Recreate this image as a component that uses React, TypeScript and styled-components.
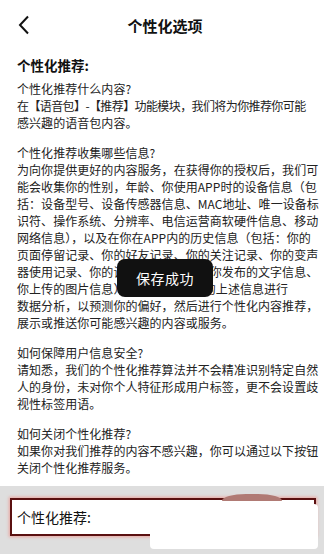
import styled, { createGlobalStyle } from 'styled-components';

const GlobalStyle = createGlobalStyle`
  html, body {
    margin: 0;
    padding: 0;
    background: #ffffff;
  }
  body {
    font-family: "Noto Sans CJK SC", "Noto Sans", sans-serif;
    color: #222222;
  }
`;

interface Section {
  question: string;
  lines: string[];
}

const sections: Section[] = [
  {
    question: '个性化推荐什么内容?',
    lines: ['在【语音包】-【推荐】功能模块，我们将为你推荐你可能', '感兴趣的语音包内容。'],
  },
  {
    question: '个性化推荐收集哪些信息?',
    lines: [
      '为向你提供更好的内容服务，在获得你的授权后，我们可',
      '能会收集你的性别，年龄、你使用APP时的设备信息（包',
      '括：设备型号、设备传感器信息、MAC地址、唯一设备标',
      '识符、操作系统、分辨率、电信运营商软硬件信息、移动',
      '网络信息），以及在你在APP内的历史信息（包括：你的',
      '页面停留记录、你的好友记录、你的关注记录、你的变声',
      '器使用记录、你的语音包使用记录、你发布的文字信息、',
      '你上传的图片信息），我们会根据你的上述信息进行',
      '数据分析，以预测你的偏好，然后进行个性化内容推荐，',
      '展示或推送你可能感兴趣的内容或服务。',
    ],
  },
  {
    question: '如何保障用户信息安全?',
    lines: [
      '请知悉，我们的个性化推荐算法并不会精准识别特定自然',
      '人的身份，未对你个人特征形成用户标签，更不会设置歧',
      '视性标签用语。',
    ],
  },
  {
    question: '如何关闭个性化推荐?',
    lines: ['如果你对我们推荐的内容不感兴趣，你可以通过以下按钮', '关闭个性化推荐服务。'],
  },
];

function App() {
  return (
    <>
      <GlobalStyle />
      <Page>
        <NavBar>
          <BackButton aria-label="返回">
            <svg width="12" height="20" viewBox="0 0 12 20">
              <polyline points="10,1.5 2,10 10,18.5" fill="none" stroke="#111" strokeWidth="2" />
            </svg>
          </BackButton>
          <Title>个性化选项</Title>
          <span />
        </NavBar>

        <Content>
          <Heading>个性化推荐:</Heading>
          {sections.map((section) => (
            <Paragraph key={section.question}>
              {section.question}
              {section.lines.map((line) => (
                <Line key={line} $tight={line.includes('【')}>
                  {line}
                </Line>
              ))}
            </Paragraph>
          ))}
        </Content>

        <Footer>
          <SwitchCard>
            <CardLabel>个性化推荐:</CardLabel>
          </SwitchCard>
          <Smudge />
          <Patch />
        </Footer>

        <Toast>保存成功</Toast>
      </Page>
    </>
  );
}

export default App;

const Page = styled.div`
  position: relative;
  display: flex;
  flex-direction: column;
  width: 324px;
  height: 554px;
  overflow: hidden;
  background: #fff;
`;

const NavBar = styled.div`
  display: grid;
  grid-template-columns: 60px 1fr 60px;
  align-items: center;
  height: 50px;
`;

const BackButton = styled.button`
  display: flex;
  align-items: center;
  padding: 0 0 0 18px;
  border: none;
  background: none;
`;

const Title = styled.div`
  text-align: center;
  font-size: 15px;
  font-weight: 700;
  color: #111;
  padding-left: 6px;
`;

const Content = styled.div`
  flex: 1;
  padding: 5px 10px 0 17px;
  display: flex;
  flex-direction: column;
  gap: 13px;
`;

const Heading = styled.div`
  font-size: 13.5px;
  font-weight: 700;
  line-height: 20px;
  color: #111;
  margin-bottom: -8.5px;
`;

const Paragraph = styled.div`
  font-size: 12px;
  line-height: 17px;
  letter-spacing: 0.05px;
  white-space: nowrap;
`;

const Line = styled.div<{ $tight?: boolean }>`
  letter-spacing: ${({ $tight }) => ($tight ? '-0.6px' : '0.05px')};
`;

const Footer = styled.div`
  position: relative;
  height: 68px;
  padding: 12px 8px 0 10px;
  box-sizing: border-box;
  background: #dedede;
`;

const SwitchCard = styled.div`
  display: flex;
  align-items: center;
  height: 38px;
  padding-left: 5px;
  box-sizing: border-box;
  background: #fff;
  border: 2px solid #5a1010;
  box-shadow: 0 0 3px 1px #eaa49e;
`;

const CardLabel = styled.span`
  font-size: 14px;
  color: #111;
`;

const Smudge = styled.div`
  position: absolute;
  left: 222px;
  top: 8px;
  width: 60px;
  height: 7px;
  border-radius: 40% 40% 0 0 / 100% 100% 0 0;
  background: #b07a74;
`;

const Patch = styled.div`
  position: absolute;
  left: 150px;
  top: 18px;
  width: 168px;
  height: 45px;
  border-radius: 4px;
  background: #fff;
`;

const Toast = styled.div`
  position: absolute;
  left: 117px;
  top: 259px;
  width: 96px;
  height: 38px;
  display: flex;
  align-items: center;
  justify-content: center;
  border-radius: 8px;
  background: #111;
  color: #fff;
  font-size: 14px;
  letter-spacing: 0.5px;
`;
